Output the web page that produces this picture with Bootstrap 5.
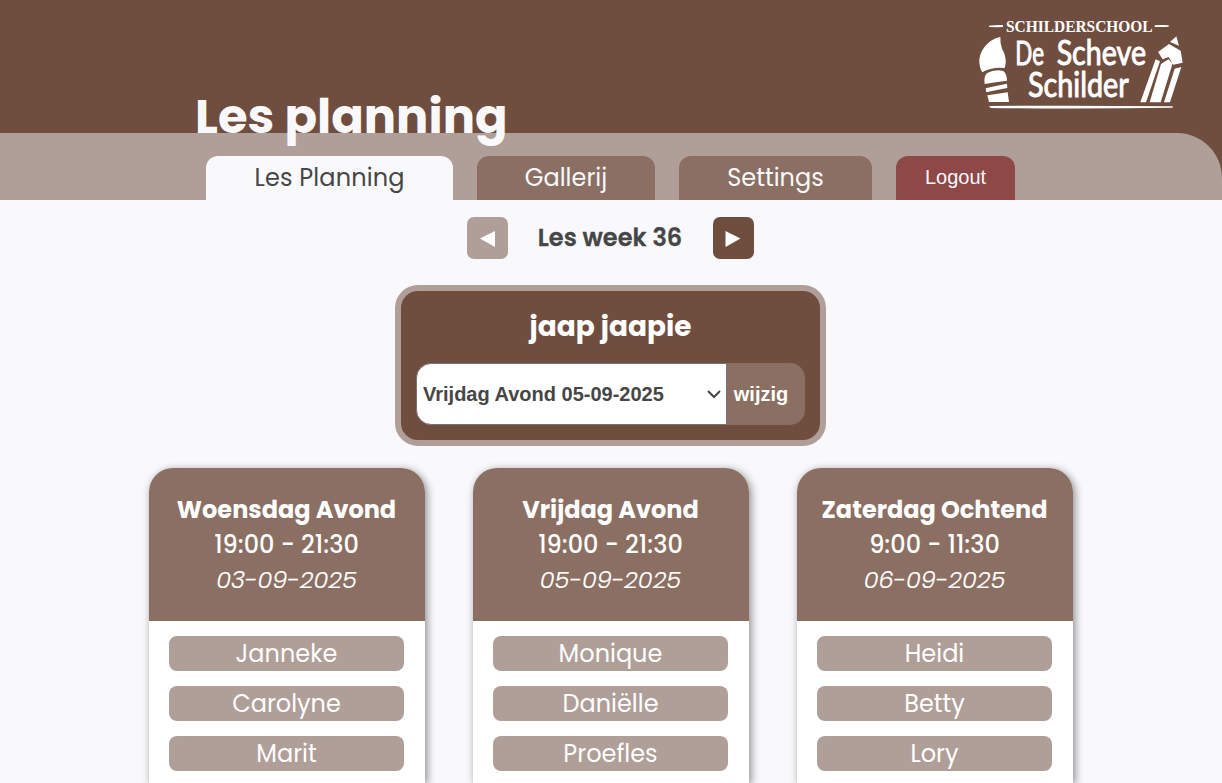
<!DOCTYPE html>
<html lang="nl">
<head>
<meta charset="utf-8">
<meta name="viewport" content="width=device-width, initial-scale=1">
<title>Les planning</title>
<link href="https://cdn.jsdelivr.net/npm/bootstrap@5.3.0/dist/css/bootstrap.min.css" rel="stylesheet">
<style>
:root{--dark:#6f4e3f;--mid:#8b6f63;--soft:#b09e99;--page:#f9f9fc;--ink:#464646}
body{background:var(--page);color:var(--ink);font:400 24px/36px Poppins,Inter,sans-serif;height:100vh;overflow:hidden}
.top-bar{background:var(--dark);height:133px;padding:10px 27px 0 195px}
.page-title{font-size:48px;line-height:72px;font-weight:700;color:var(--page);margin:71px 0 -10px;position:relative;z-index:2;white-space:nowrap}
.nav-back{background:var(--dark)}
.nav-strip{background:var(--soft);height:67px;border-top-right-radius:45px;padding-left:206px;gap:24px}
.tab-item{height:44px;border-radius:12px 12px 0 0;background:var(--mid);color:var(--page);text-decoration:none;line-height:43px;text-align:center}
.tab-item.current{background:var(--page);color:var(--ink);letter-spacing:.15px}
.tab-logout{background:#8e4848;border:0;font:20px/41px "Liberation Sans",sans-serif;width:119px;padding-bottom:3px}
.week-row{margin-top:17px;height:42px;padding-right:2px}
.arrow-btn{width:41px;height:42px;border-radius:7px;border:0;background:var(--dark);padding:0}
.arrow-btn.off{background:var(--soft)}
.week-label{width:205px;text-align:center;font-weight:600;letter-spacing:.05px;-webkit-text-stroke:.3px currentColor}
.pick-box{width:431px;height:161px;margin:26px 1px 0 0;background:var(--dark);border:6px solid var(--soft);border-radius:23px;padding:15px 15px;color:#fff}
.pick-name{font-size:28px;line-height:42px;font-weight:700;margin:0 0 15px;text-align:center}
.pick-select{width:311px;height:62px;border:1px solid #767676;border-radius:15px 0 0 15px;padding:0 6px;color:var(--ink);font:bold 20px "Liberation Sans",sans-serif;appearance:none;background:#fff url("data:image/svg+xml,%3Csvg xmlns='http://www.w3.org/2000/svg' viewBox='0 0 14 9'%3E%3Cpath d='M1 1l6 6 6-6' fill='none' stroke='%23464646' stroke-width='2'/%3E%3C/svg%3E") no-repeat right 5px center/14px 9px}
.pick-btn{width:78px;height:62px;border:0;border-radius:0 15px 15px 0;background:var(--mid);color:#fff;font:bold 20px "Liberation Sans",sans-serif;padding:0 10px 0 0}
.lesson-row{gap:48px;margin-top:22px}
.lesson{width:276px;height:315px;background:#fff;border-radius:24px 24px 0 0;box-shadow:2px 2px 8px rgba(0,0,0,.45);overflow:hidden}
.lesson-head{height:153px;background:var(--mid);color:#fff;line-height:35px;padding:24px 1px 0 0;text-align:center}
.lesson-head h2{font-size:24px;line-height:35px;font-weight:700;margin:0}
.lesson-head .hours{font-weight:500}
.lesson-head .day{font-style:italic;font-weight:300;-webkit-text-stroke:.2px currentColor}
.people{gap:15px;padding:15px 21px 12px 20px}
.person{height:35px;border-radius:8px;background:var(--soft);color:#fff;text-align:center;line-height:35px}
</style>
</head>
<body>
<header class="top-bar d-flex justify-content-between align-items-start">
  <h1 class="page-title">Les planning</h1>
  <svg width="225" height="110" viewBox="0 0 675 330" fill="#fff" role="img" aria-label="Schilderschool De Scheve Schilder">
    <path d="M57 47q20-3 42-2v6q-20 1-42 0zM554 46q20-2 42 0v4q-20 2-42 1z"/>
    <text x="108" y="65" font-family="Liberation Serif,serif" font-weight="bold" font-size="49" textLength="440" lengthAdjust="spacingAndGlyphs">SCHILDERSCHOOL</text>
    <g font-family="Lato,sans-serif" font-weight="400" stroke="#fff" stroke-width="3">
    <text x="136" y="164" font-size="98" textLength="86" lengthAdjust="spacingAndGlyphs">De</text>
    <text x="260" y="164" font-size="105" textLength="268" lengthAdjust="spacingAndGlyphs">Scheve</text>
    <text x="174" y="262" font-size="104" textLength="302" lengthAdjust="spacingAndGlyphs">Schilder</text>
    </g>
    <path d="M91 81C61 86 29 116 28 154q0 20 9 33 28-17 67-13c7-21 2-41-8-58q-6-17-5-35zM44 222q-4-24 8-33 21-12 48-6 11 10 11 29-34 4-67 10zM47 235q32-8 64-14l1 13q-31 5-63 13zM52 256l61-9 4 29H57z"/>
    <path d="M619 79l8 28-27-11zM597 102l35 20 6 36-28 6-14-23-18 7-14-22zM557 148l13 6-42 123h-17zM573 162l22-14 13 12-36 117h-33zM614 176l20-5-34 106h-18z"/>
    <path d="M57 288q290-2 551 1v4q-260 4-546 1z"/>
  </svg>
</header>
<div class="nav-back">
  <nav class="nav-strip d-flex align-items-end">
    <a class="tab-item current" href="#" style="width:247px">Les Planning</a>
    <a class="tab-item" href="#" style="width:178px">Gallerij</a>
    <a class="tab-item" href="#" style="width:193px">Settings</a>
    <button class="tab-item tab-logout" type="button">Logout</button>
  </nav>
</div>
<main class="d-flex flex-column align-items-center">
  <div class="week-row d-flex align-items-center">
    <button class="arrow-btn off d-flex align-items-center justify-content-center" type="button" aria-label="Vorige week"><svg width="16" height="18" viewBox="0 0 16 18"><path d="M1 9.500L16 2v16z" fill="#fff"/></svg></button>
    <span class="week-label">Les week 36</span>
    <button class="arrow-btn d-flex align-items-center justify-content-center" type="button" aria-label="Volgende week"><svg width="16" height="18" viewBox="0 0 16 18"><path d="M15.500 9.500L.500 2v16z" fill="#fff"/></svg></button>
  </div>
  <section class="pick-box">
    <h2 class="pick-name">jaap jaapie</h2>
    <form class="d-flex">
      <select class="pick-select" aria-label="Les"><option>Vrijdag Avond 05-09-2025</option></select>
      <button class="pick-btn" type="button">wijzig</button>
    </form>
  </section>
  <div class="lesson-row d-flex">
    <article class="lesson">
      <div class="lesson-head"><h2>Woensdag Avond</h2><div class="hours">19:00 - 21:30</div><div class="day">03-09-2025</div></div>
      <div class="people d-flex flex-column"><div class="person">Janneke</div><div class="person">Carolyne</div><div class="person">Marit</div></div>
    </article>
    <article class="lesson">
      <div class="lesson-head"><h2>Vrijdag Avond</h2><div class="hours">19:00 - 21:30</div><div class="day">05-09-2025</div></div>
      <div class="people d-flex flex-column"><div class="person">Monique</div><div class="person">Daniëlle</div><div class="person">Proefles</div></div>
    </article>
    <article class="lesson">
      <div class="lesson-head"><h2>Zaterdag Ochtend</h2><div class="hours">9:00 - 11:30</div><div class="day">06-09-2025</div></div>
      <div class="people d-flex flex-column"><div class="person">Heidi</div><div class="person">Betty</div><div class="person">Lory</div></div>
    </article>
  </div>
</main>
<script src="https://cdn.jsdelivr.net/npm/bootstrap@5.3.0/dist/js/bootstrap.bundle.min.js"></script>
</body>
</html>
